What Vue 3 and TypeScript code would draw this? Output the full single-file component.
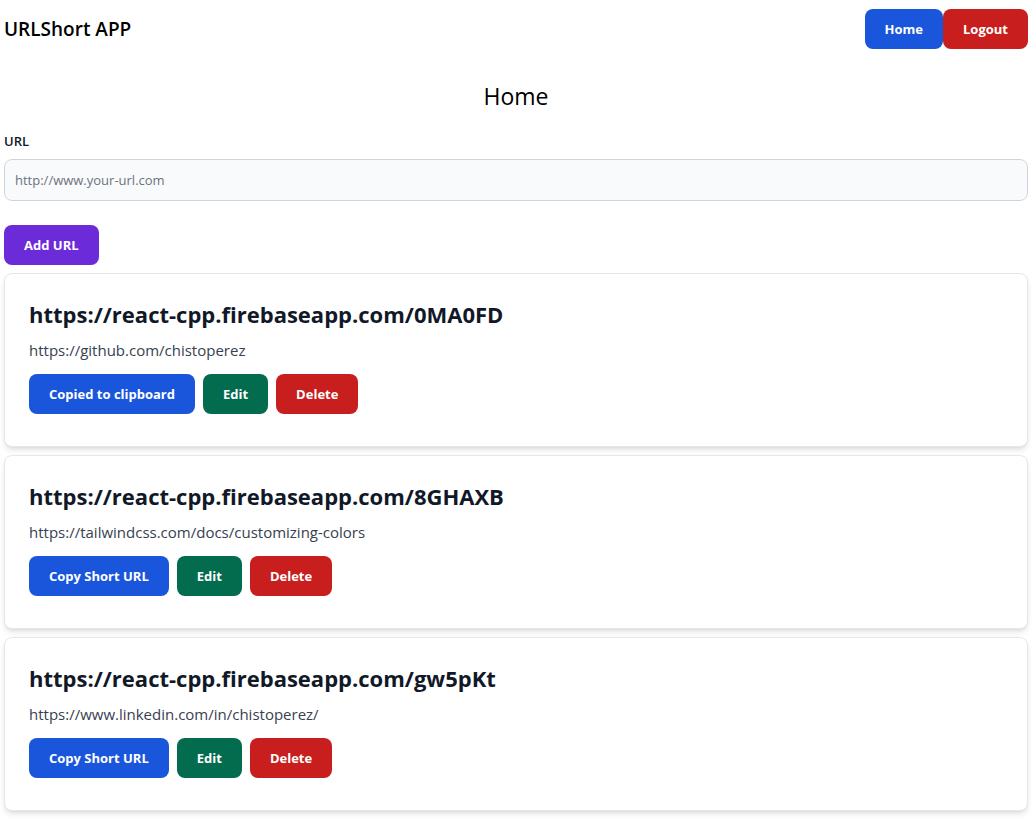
<script setup lang="ts">
import { ref } from 'vue'

interface ShortUrl {
  id: string
  origin: string
}

const base = 'https://react-cpp.firebaseapp.com/'
const newUrl = ref('')
const copied = ref('0MA0FD')
const urls = ref<ShortUrl[]>([
  { id: '0MA0FD', origin: 'https://github.com/chistoperez' },
  { id: '8GHAXB', origin: 'https://tailwindcss.com/docs/customizing-colors' },
  { id: 'gw5pKt', origin: 'https://www.linkedin.com/in/chistoperez/' },
])

function remove(id: string) {
  urls.value = urls.value.filter((item) => item.id !== id)
}
</script>

<template>
  <div class="page">
    <nav class="navbar">
      <span class="brand">URLShort APP</span>
      <div class="nav-actions">
        <a class="btn blue" href="#">Home</a>
        <button class="btn red" type="button">Logout</button>
      </div>
    </nav>
    <main>
      <h1 class="title">Home</h1>
      <form class="url-form" @submit.prevent>
        <label for="url">URL</label>
        <input id="url" v-model="newUrl" type="text" placeholder="http://www.your-url.com" />
        <button class="btn purple" type="submit">Add URL</button>
      </form>
      <section class="list">
        <article v-for="item in urls" :key="item.id" class="card">
          <h2>{{ base }}{{ item.id }}</h2>
          <p>{{ item.origin }}</p>
          <div class="actions">
            <button class="btn blue" type="button" @click="copied = item.id">
              {{ copied === item.id ? 'Copied to clipboard' : 'Copy Short URL' }}
            </button>
            <button class="btn green" type="button">Edit</button>
            <button class="btn red" type="button" @click="remove(item.id)">Delete</button>
          </div>
        </article>
      </section>
    </main>
  </div>
</template>

<style>
body {
  margin: 0;
  background: #fff;
}
</style>

<style scoped>
* {
  box-sizing: border-box;
}
.page {
  padding: 9px 6px 8px 4px;
  font-family: "Segoe UI", "Open Sans", "Noto Sans", sans-serif;
  font-size: 16px;
  line-height: 24px;
  color: #000;
}
.navbar {
  display: flex;
  align-items: center;
  justify-content: space-between;
}
.brand {
  font-size: 19px;
  line-height: 30px;
  font-weight: 600;
}
.nav-actions {
  display: flex;
}
.btn {
  display: inline-block;
  margin: 0;
  padding: 10px 20px;
  border: 0;
  border-radius: 8px;
  font-family: inherit;
  font-size: 13px;
  line-height: 20px;
  font-weight: 700;
  color: #fff;
  text-decoration: none;
  white-space: nowrap;
  cursor: pointer;
}
.blue {
  background: #1a56db;
}
.red {
  background: #c81e1e;
}
.green {
  background: #046c4e;
}
.purple {
  background: #6c2bd9;
}
.title {
  margin: 31px 0 19px;
  font-size: 23px;
  line-height: 32px;
  font-weight: 400;
  text-align: center;
}
.url-form {
  display: flex;
  flex-direction: column;
  align-items: flex-start;
}
.url-form label {
  margin-bottom: 8px;
  font-size: 13px;
  line-height: 20px;
  font-weight: 600;
  color: #111928;
}
.url-form input {
  width: 100%;
  margin: 0 0 24px;
  padding: 10px;
  border: 1px solid #d1d5db;
  border-radius: 8px;
  background: #f9fafb;
  font-family: inherit;
  font-size: 13px;
  line-height: 20px;
  color: #111928;
}
.url-form input::placeholder {
  color: #6b7280;
  opacity: 1;
}
.list {
  display: grid;
  gap: 8px;
  margin-top: 8px;
}
.card {
  padding: 24px 24px 32px;
  border: 1px solid #e5e7eb;
  border-radius: 8px;
  background: #fff;
  box-shadow: 0 4px 6px -1px rgb(0 0 0 / 10%), 0 2px 4px -2px rgb(0 0 0 / 10%);
}
.card h2 {
  margin: 0 0 8px;
  font-size: 22px;
  line-height: 32px;
  font-weight: 700;
  color: #111928;
}
.card p {
  margin: 0 0 12px;
  font-size: 15px;
  line-height: 24px;
  color: #374151;
}
.actions {
  display: flex;
  flex-wrap: wrap;
  gap: 8px;
}
</style>
